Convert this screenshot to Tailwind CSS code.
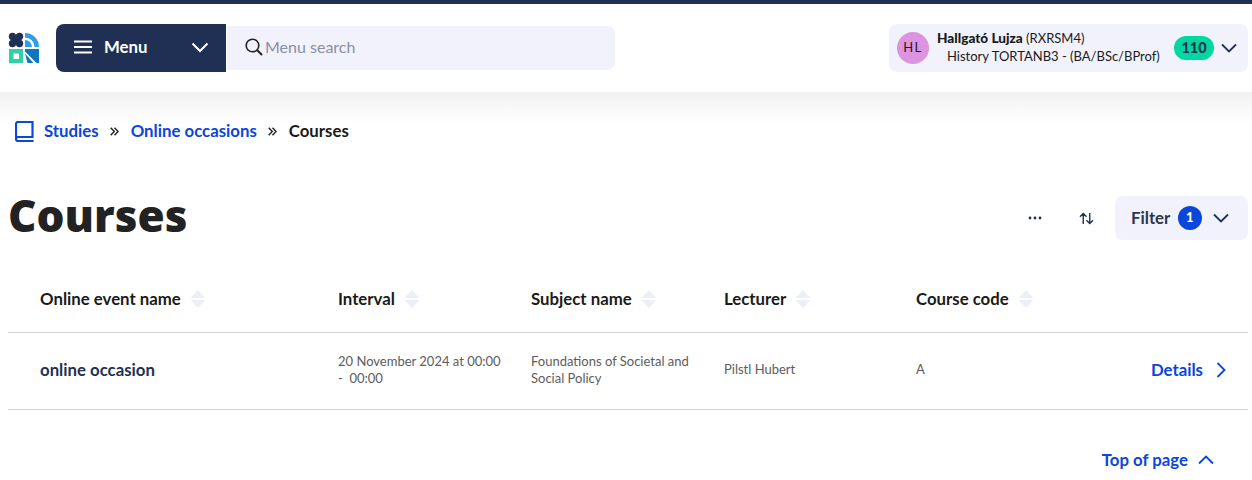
<!DOCTYPE html>
<html>
<head>
<meta charset="utf-8">
<script src="https://cdn.jsdelivr.net/npm/@tailwindcss/browser@4"></script>
</head>
<body class="bg-white font-['Lato',sans-serif] text-[#1a1a1a] overflow-hidden">
<div class="w-[1252px] h-[480px] overflow-hidden">
  <div class="h-[4px] bg-[#1f3054]"></div>
  <header class="h-[88px] flex items-center pl-[8px] pr-[4px]">
    <svg class="w-[32px] h-[32px] mr-[16px] shrink-0" viewBox="0 0 32 32">
      <g fill="#1f3054"><circle cx="4.500" cy="4.500" r="3.700"/><circle cx="11.500" cy="4.500" r="3.700"/><circle cx="4.500" cy="11.500" r="3.700"/><circle cx="11.500" cy="11.500" r="3.700"/><rect x="6" y="6" width="4" height="4"/></g>
      <rect x="1" y="17" width="14" height="14" fill="#2fd0a8"/><rect x="5.500" y="21.500" width="5.500" height="5.500" fill="#fff"/>
      <path d="M17 1a14 14 0 0 1 14 14h-4.500A9.500 9.500 0 0 0 17 5.500z" fill="#2f9fe8"/><path d="M17 8a7 7 0 0 1 7 7h-7z" fill="#2f9fe8"/>
      <path d="M17 17h14v14h-2.500l-11.500-11.500z" fill="#0f75bc"/><path d="M17 21.500l8.500 9.500h-6z" fill="#0f75bc"/>
    </svg>
    <button class="w-[170px] h-[48px] bg-[#1f3054] rounded-l-[8px] flex items-center pl-[17px] pr-[17px] pb-[2px] text-white font-bold text-[16.8px]">
      <svg class="w-[20px] h-[16px] mr-[11px]" viewBox="0 0 20 16" fill="none" stroke="#fff" stroke-width="1.800"><path d="M1 2.500h18M1 8h18M1 13.500h18"/></svg>
      <span>Menu</span>
      <svg class="w-[18px] h-[11px] ml-auto" viewBox="0 0 18 11" fill="none" stroke="#fff" stroke-width="2"><path d="M1.500 1.500 9 9l7.500-7.500"/></svg>
    </button>
    <div class="ml-[1px] w-[388px] h-[44px] bg-[#f1f2fb] rounded-r-[8px] flex items-center pl-[18px] pb-[2px]">
      <svg class="w-[18px] h-[18px] shrink-0" viewBox="0 0 18 18" fill="none" stroke="#222" stroke-width="1.600"><circle cx="7.500" cy="7.500" r="6.300"/><path d="m12 12 5 5" stroke-width="2"/></svg>
      <span class="ml-[2px] text-[16px] text-[#8a8fa3]">Menu search</span>
    </div>
    <div class="ml-auto w-[359px] h-[48px] bg-[#f1f2fb] rounded-[8px] flex items-center pl-[8px] pr-[10px]">
      <div class="w-[32px] h-[32px] rounded-full bg-[#dc93e0] flex items-center justify-center text-[13px] tracking-[1.500px] text-[#1a1a1a]">HL</div>
      <div class="ml-[8px] text-[13px] leading-[18px] text-[#1a1a1a]">
        <div class="-mt-[2px]"><b class="font-black text-[13.6px]">Hallgató Lujza</b> (RXRSM4)</div>
        <div class="pl-[10px]">History TORTANB3 - (BA/BSc/BProf)</div>
      </div>
      <div class="ml-auto w-[40px] h-[24px] rounded-full bg-[#00d8a2] flex items-center justify-center text-[14.500px] font-black text-[#1f3054] -translate-x-[1px]">110</div>
      <svg class="w-[16px] h-[10px] ml-[7px] -translate-x-[1px]" viewBox="0 0 16 10" fill="none" stroke="#1f3054" stroke-width="1.800"><path d="M1 1.500 8 8.500l7-7"/></svg>
    </div>
  </header>
  <div class="h-[78px] bg-gradient-to-b from-[#f2f2f2] to-white to-[42%] pl-[15px] flex items-center text-[16.8px] font-bold">
    <svg class="w-[19px] h-[21px] shrink-0 mr-[10px]" viewBox="0 0 19 21" fill="none" stroke="#0a46e0" stroke-width="2.200"><path d="M1 17V3a2 2 0 0 1 2-2h14.500v15H3a2 2 0 0 0-2 2 2 2 0 0 0 2 2h14.500v-1"/></svg>
    <a class="text-[#0a46d9]">Studies</a>
    <svg class="w-[9px] h-[9px] mx-[11.500px]" viewBox="0 0 9 9" fill="none" stroke="#222" stroke-width="1.400"><path d="M.7.7 4.300 4.500.7 8.300M4.500.7 8.100 4.500 4.500 8.300"/></svg>
    <a class="text-[#0a46d9]">Online occasions</a>
    <svg class="w-[9px] h-[9px] mx-[11.500px]" viewBox="0 0 9 9" fill="none" stroke="#222" stroke-width="1.400"><path d="M.7.7 4.300 4.500.7 8.300M4.500.7 8.100 4.500 4.500 8.300"/></svg>
    <span>Courses</span>
  </div>
  <div class="h-[76px] mt-[10px] flex items-center pl-[8px] pr-[4px]">
    <h1 class="text-[44px] font-black font-['Noto_Sans',sans-serif] leading-none text-[#222] pb-[6px]">Courses</h1>
    <div class="ml-auto flex items-center">
      <svg class="w-[14px] h-[4px] mr-[37px]" viewBox="0 0 14 4" fill="#1f3054"><circle cx="2" cy="2" r="1.400"/><circle cx="7" cy="2" r="1.400"/><circle cx="12" cy="2" r="1.400"/></svg>
      <svg class="w-[15px] h-[13px] mr-[21px]" viewBox="0 0 16 14" fill="none" stroke="#1f3054" stroke-width="1.500"><path d="M4.500 13V1.500M1 5l3.500-3.500L8 5M11.500 1v11.500M8 9l3.500 3.500L15 9"/></svg>
      <div class="w-[133px] h-[44px] rounded-[8px] bg-[#f1f2fb] flex items-center pl-[16px] text-[16.800px] font-bold text-[#2b3650]">
        Filter
        <span class="ml-[7.500px] w-[24px] h-[24px] rounded-full bg-[#0a46d9] text-white text-[13px] font-black flex items-center justify-center">1</span>
        <svg class="w-[16px] h-[10px] ml-[11px]" viewBox="0 0 16 10" fill="none" stroke="#1f3054" stroke-width="1.800"><path d="M1 1.500 8 8.500l7-7"/></svg>
      </div>
    </div>
  </div>
  <div class="mx-[8px] w-[1240px] mt-[6px]">
    <div class="h-[71px] border-b border-[#d2d2d2] grid grid-cols-[298px_193px_193px_192px_1fr] pl-[32px] items-center text-[16.800px] font-bold text-[#1a1a1a] pt-[3px]">
      <div class="flex items-center gap-[9px]">Online event name
        <svg class="w-[16px] h-[20px]" viewBox="0 0 16 20" fill="#eceef8"><path d="M8 1 15.500 9H.5zM.5 11h15L8 19z"/></svg></div>
      <div class="flex items-center gap-[9px]">Interval
        <svg class="w-[16px] h-[20px]" viewBox="0 0 16 20" fill="#eceef8"><path d="M8 1 15.500 9H.5zM.5 11h15L8 19z"/></svg></div>
      <div class="flex items-center gap-[9px]">Subject name
        <svg class="w-[16px] h-[20px]" viewBox="0 0 16 20" fill="#eceef8"><path d="M8 1 15.500 9H.5zM.5 11h15L8 19z"/></svg></div>
      <div class="flex items-center gap-[9px]">Lecturer
        <svg class="w-[16px] h-[20px]" viewBox="0 0 16 20" fill="#eceef8"><path d="M8 1 15.500 9H.5zM.5 11h15L8 19z"/></svg></div>
      <div class="flex items-center gap-[9px]">Course code
        <svg class="w-[16px] h-[20px]" viewBox="0 0 16 20" fill="#eceef8"><path d="M8 1 15.500 9H.5zM.5 11h15L8 19z"/></svg></div>
    </div>
    <div class="h-[77px] border-b border-[#d2d2d2] grid grid-cols-[298px_193px_193px_192px_1fr] pl-[32px] pb-[3px] items-center text-[13px] leading-[17px] text-[#5c5c5c]">
      <div class="text-[16.800px] font-bold text-[#1f3054]">online occasion</div>
      <div class="pr-[20px] whitespace-pre-wrap">20 November 2024 at 00:00
-  00:00</div>
      <div class="pr-[20px]">Foundations of Societal and Social Policy</div>
      <div>Pilstl Hubert</div>
      <div class="flex items-center">A
        <span class="ml-auto flex items-center text-[16.800px] font-bold text-[#0a46d9]">Details
          <svg class="w-[10px] h-[16px] ml-[13px] mr-[22px]" viewBox="0 0 10 16" fill="none" stroke="#0a46d9" stroke-width="1.800"><path d="M1.500 1 8.500 8l-7 7"/></svg></span>
      </div>
    </div>
  </div>
  <div class="flex justify-end items-center mt-[37px] pr-[38px] text-[16.800px] font-bold text-[#0a46d9]">
    Top of page
    <svg class="w-[16px] h-[10px] ml-[10px]" viewBox="0 0 16 10" fill="none" stroke="#0a46d9" stroke-width="1.800"><path d="M1 8.500 8 1.500l7 7"/></svg>
  </div>
</div>
</body>
</html>
